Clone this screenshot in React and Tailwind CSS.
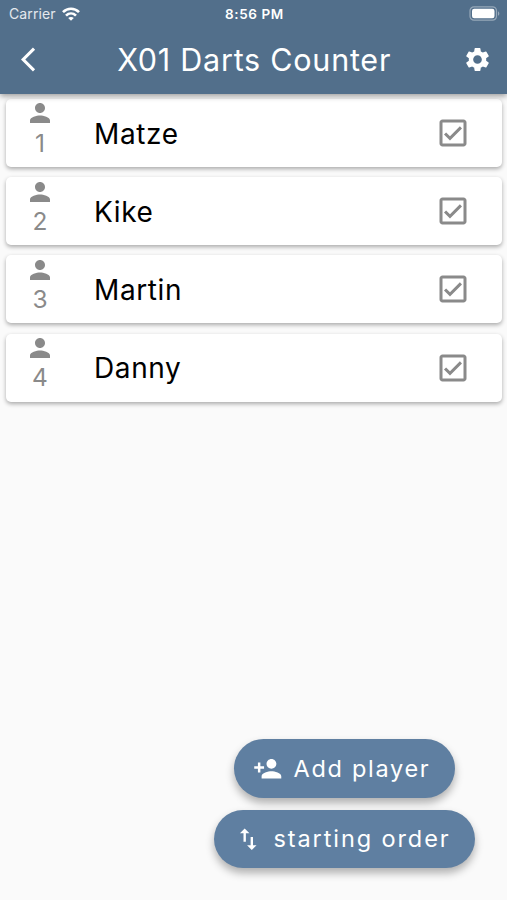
import { MdArrowBackIos, MdImportExport, MdOutlineCheckBox, MdPerson, MdPersonAdd, MdSettings } from 'react-icons/md';

const players = ['Matze', 'Kike', 'Martin', 'Danny'];

const StatusBar = () => (
    <div className="grid h-[26px] grid-cols-[1fr_auto_1fr] items-center pl-[9px] pr-[7px] pt-px text-[13px]">
        <div className="flex items-center gap-[6px] text-white/85">
            <span className="text-[14px] tracking-[0.1px]">Carrier</span>
            <svg className="h-[14px] w-[18px]" viewBox="0 0 18 14" fill="none" stroke="white" strokeWidth="2.7">
                <path d="M1 5.1C5.6.6 12.4.6 17 5.1" />
                <path d="M4 8.6c2.9-2.8 7.1-2.8 10 0" />
                <path d="M9 13.8 6.2 11c1.6-1.4 4-1.4 5.6 0z" fill="white" stroke="none" />
            </svg>
        </div>
        <span className="pt-px text-center text-[13.5px] font-semibold tracking-[0.6px]">8:56 PM</span>
        <svg className="h-[15px] w-[31px] justify-self-end" viewBox="0 0 31 15">
            <rect x="1" y=".8" width="26.5" height="13.4" rx="4" fill="none" stroke="white" strokeOpacity=".4" strokeWidth="1.2" />
            <rect x="3" y="2.8" width="22.5" height="9.4" rx="2.2" fill="white" />
            <path d="M29 5.2c1.8.8 1.8 3.8 0 4.6z" fill="white" fillOpacity=".4" />
        </svg>
    </div>
);

const Header = () => (
    <header className="relative z-10 h-[94px] bg-[#526f8b] text-white shadow-[0_2px_6px_rgba(0,0,0,0.4)]">
        <StatusBar />
        <div className="grid h-[68px] grid-cols-[1fr_auto_1fr] items-center pl-[20.5px] pr-[15px]">
            <button className="-mt-px w-[29px]">
                <MdArrowBackIos className="size-[29px]" />
            </button>
            <h1 className="-ml-[4px] whitespace-nowrap text-[30.5px] tracking-[0.75px]">X01 Darts Counter</h1>
            <button className="-mt-px justify-self-end">
                <MdSettings className="size-[29px]" />
            </button>
        </div>
    </header>
);

const PlayerCard = ({ number, name }) => (
    <li className="flex h-[68px] items-center rounded-[5px] bg-white shadow-[0_2px_4px_rgba(0,0,0,0.32)]">
        <div className="ml-[19px] flex h-full w-[30px] flex-col items-center text-[#8a8a8a]">
            <MdPerson className="-mt-[0.6px] size-[30px] shrink-0" />
            <span className="-mt-[0.6px] text-[24.5px] leading-[30px]">{number}</span>
        </div>
        <span className="ml-[39px] flex-1 pt-px text-[28px] tracking-[0.6px] text-black">{name}</span>
        <MdOutlineCheckBox className="mr-[31px] size-[36px] text-[#8a8a8a]" />
    </li>
);

const App = () => {
    return (
        <div className="flex h-[900px] w-[507px] flex-col overflow-hidden bg-[#fafafa] font-['Inter','Liberation_Sans',sans-serif]">
            <Header />

            <ul className="flex flex-1 flex-col gap-[10.2px] pl-[6px] pr-[5px] pt-[5px]">
                {players.map((name, i) => (
                    <PlayerCard key={name} number={i + 1} name={name} />
                ))}
            </ul>

            {/* Action buttons */}
            <div className="mb-[32px] mr-[32px] flex flex-col items-center gap-[12px] self-end text-[23.5px] text-white">
                <button className="flex h-[58.5px] w-[221px] items-center rounded-full bg-[#5f7fa1] pl-[19px] shadow-[0_5px_8px_rgba(0,0,0,0.3)]">
                    <MdPersonAdd className="size-[29.5px]" />
                    <span className="ml-[11px] whitespace-nowrap tracking-[1.7px]">Add player</span>
                </button>
                <button className="flex h-[58.5px] w-[261px] items-center rounded-full bg-[#5f7fa1] pl-[20px] shadow-[0_5px_8px_rgba(0,0,0,0.3)]">
                    <MdImportExport className="size-[28.5px]" />
                    <span className="ml-[11px] whitespace-nowrap tracking-[1.9px]">starting order</span>
                </button>
            </div>
        </div>
    );
};

export default App;
